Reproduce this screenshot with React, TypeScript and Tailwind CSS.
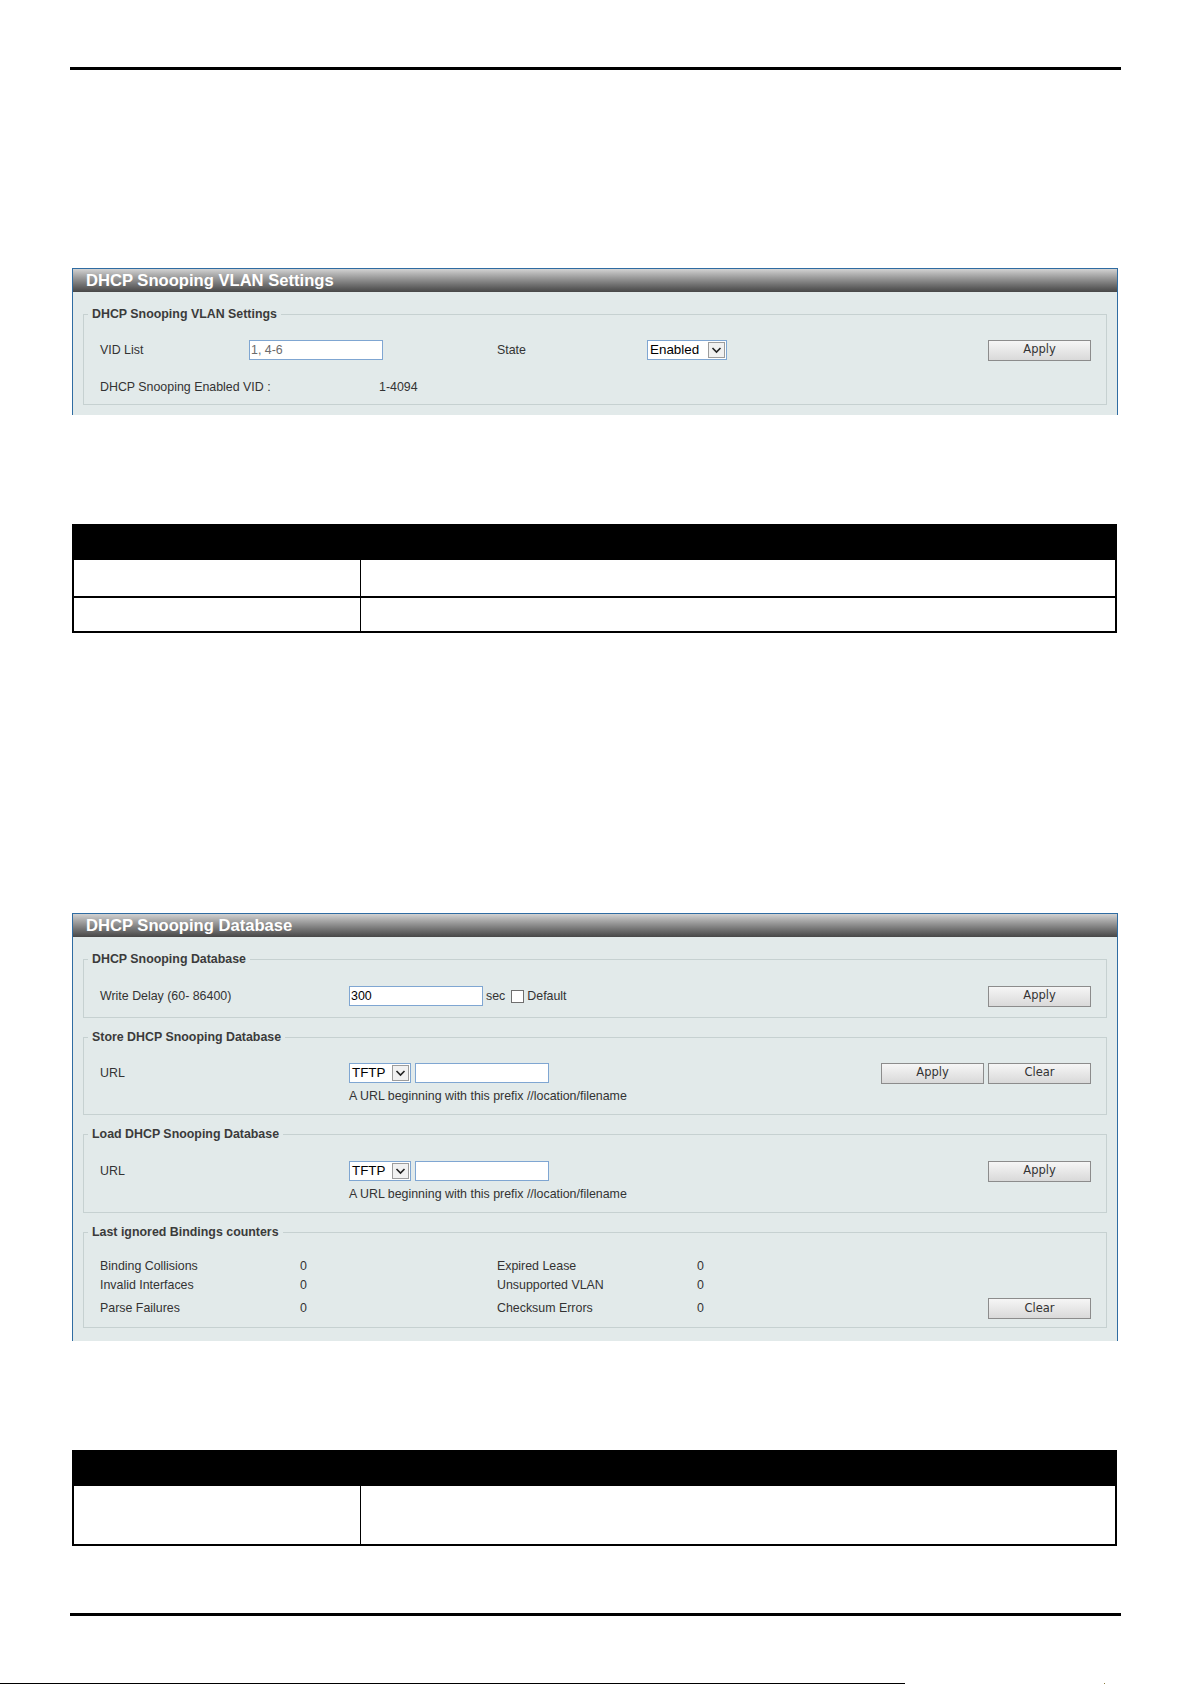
import React from "react";

const font = "font-['Liberation_Sans',Arial,sans-serif]";

const Panel = ({ title, className, bodyClass, children }: { title: string; className?: string; bodyClass?: string; children: React.ReactNode }) => (
  <div className={`ml-[72px] w-[1046px] border-x border-t border-[#2f6ca2] ${className ?? ""}`}>
    <div className="h-[23px] bg-linear-to-b from-[#d2d2d2] via-[#8a8a8a] to-[#474747] pl-[13px] text-[16.6px] font-bold leading-[23px] text-white">
      {title}
    </div>
    <div className={`bg-[#e2eaea] px-[10px] ${bodyClass ?? "pb-[10px]"}`}>{children}</div>
  </div>
);

// fieldset keeps zero padding so the legend sits close to the left corner
const Group = ({ legend, className, children }: { legend: string; className?: string; children: React.ReactNode }) => (
  <fieldset className="border border-[#c6d1d1]">
    <legend className="ml-[4px] px-[4px] text-[12.4px] font-bold leading-[14px] text-[#3b3b3b]">{legend}</legend>
    <div className={`pl-[16px] pr-[15px] ${className ?? ""}`}>{children}</div>
  </fieldset>
);

const Button = ({ label }: { label: string }) => (
  <button className="h-[21px] w-[103px] border border-[#8c8c8c] bg-linear-to-b from-[#f6f6f6] to-[#d9d9d9] font-['DejaVu_Sans',sans-serif] text-[11.5px] text-[#333]">
    {label}
  </button>
);

const TextBox = ({ value, muted }: { value?: string; muted?: boolean }) => (
  <div
    className={`h-[20px] w-[134px] border border-[#7fa6d2] bg-white pl-[1px] text-[12.4px] leading-[18px] ${
      muted ? "text-[#6b6b6b]" : "text-black"
    }`}
  >
    {value}
  </div>
);

const Select = ({ value, width }: { value: string; width: string }) => (
  <div className={`flex h-[20px] items-center justify-between border border-[#7fa6d2] bg-white pl-[2px] pr-[1px] ${width}`}>
    <span className="text-[13.4px] leading-[18px] text-black">{value}</span>
    <span className="flex h-[16px] w-[17px] items-center justify-center border border-[#9c9c9c] bg-[#f1f1f1]">
      <svg width="11" height="8" viewBox="0 0 11 8">
        <polyline points="1.5,2 5.5,6 9.5,2" fill="none" stroke="#222" strokeWidth="1.6" />
      </svg>
    </span>
  </div>
);

const DescTable = ({ rows, className }: { rows: number[]; className?: string }) => (
  <div className={`ml-[72px] w-[1045px] border-x-2 border-b-2 border-black ${className ?? ""}`}>
    <div className="h-[36px] bg-black" />
    {rows.map((h, i) => (
      <div key={i} className={`flex border-black ${i > 0 ? "border-t-2" : ""}`} style={{ height: h }}>
        <div className="w-[287px] border-r border-black" />
        <div className="flex-1" />
      </div>
    ))}
  </div>
);

const Counter = ({ label, value }: { label: string; value: string }) => (
  <>
    <span className="w-[200px]">{label}</span>
    <span className="w-[197px]">{value}</span>
  </>
);

export default function App() {
  return (
    <div className={`relative flex h-[1684px] w-[1192px] flex-col bg-white text-[12.4px] text-[#333] ${font}`}>
      <div className="ml-[70px] mt-[67px] h-[3px] w-[1051px] bg-black" />

      <Panel title="DHCP Snooping VLAN Settings" className="mt-[198px]">
        <div className="pt-[15px]">
          <Group legend="DHCP Snooping VLAN Settings" className="pb-[7px]">
            <div className="mt-[19px] flex h-[20px] items-center">
              <span className="w-[149px]">VID List</span>
              <TextBox value="1, 4-6" muted />
              <span className="ml-[114px] w-[150px]">State</span>
              <Select value="Enabled" width="w-[80px]" />
              <div className="ml-auto">
                <Button label="Apply" />
              </div>
            </div>
            <div className="mt-[17px] flex h-[20px] items-center">
              <span className="w-[279px]">DHCP Snooping Enabled VID :</span>
              <span>1-4094</span>
            </div>
          </Group>
        </div>
      </Panel>

      <DescTable rows={[36, 35]} className="mt-[109px]" />

      <Panel title="DHCP Snooping Database" className="mt-[280px]" bodyClass="pb-[13px]">
        <div className="flex flex-col gap-[12px] pt-[15px]">
          <Group legend="DHCP Snooping Database" className="pb-[11px]">
            <div className="mt-[20px] flex h-[20px] items-center">
              <span className="w-[249px]">Write Delay (60- 86400)</span>
              <TextBox value="300" />
              <span className="ml-[3px]">sec</span>
              <span className="ml-[6px] h-[13px] w-[13px] border border-[#6f6f6f] bg-white" />
              <span className="ml-[3px]">Default</span>
              <div className="ml-auto">
                <Button label="Apply" />
              </div>
            </div>
          </Group>

          <Group legend="Store DHCP Snooping Database" className="pb-[11px]">
            <div className="mt-[19px] flex h-[20px] items-center">
              <span className="w-[249px]">URL</span>
              <Select value="TFTP" width="w-[62px]" />
              <div className="ml-[4px]">
                <TextBox />
              </div>
              <div className="ml-auto flex gap-[4px]">
                <Button label="Apply" />
                <Button label="Clear" />
              </div>
            </div>
            <div className="mt-[6px] pl-[249px] leading-[14px]">A URL beginning with this prefix //location/filename</div>
          </Group>

          <Group legend="Load DHCP Snooping Database" className="pb-[11px]">
            <div className="mt-[20px] flex h-[20px] items-center">
              <span className="w-[249px]">URL</span>
              <Select value="TFTP" width="w-[62px]" />
              <div className="ml-[4px]">
                <TextBox />
              </div>
              <div className="ml-auto">
                <Button label="Apply" />
              </div>
            </div>
            <div className="mt-[6px] pl-[249px] leading-[14px]">A URL beginning with this prefix //location/filename</div>
          </Group>

          <Group legend="Last ignored Bindings counters" className="pb-[8px]">
            <div className="mt-[18px] flex h-[19px] items-center">
              <Counter label="Binding Collisions" value="0" />
              <Counter label="Expired Lease" value="0" />
            </div>
            <div className="flex h-[19px] items-center">
              <Counter label="Invalid Interfaces" value="0" />
              <Counter label="Unsupported VLAN" value="0" />
            </div>
            <div className="mt-[3px] flex h-[21px] items-center">
              <Counter label="Parse Failures" value="0" />
              <Counter label="Checksum Errors" value="0" />
              <div className="ml-auto">
                <Button label="Clear" />
              </div>
            </div>
          </Group>
        </div>
      </Panel>

      <DescTable rows={[58]} className="mt-[109px]" />

      <div className="ml-[70px] mt-[67px] h-[3px] w-[1051px] bg-black" />

      <div className="mt-auto flex h-[1px] items-start">
        <div className="h-[1px] w-[905px] bg-black" />
        <div className="ml-[199px] h-[1px] w-[1px] bg-[#8a7a3a]" />
      </div>
    </div>
  );
}
